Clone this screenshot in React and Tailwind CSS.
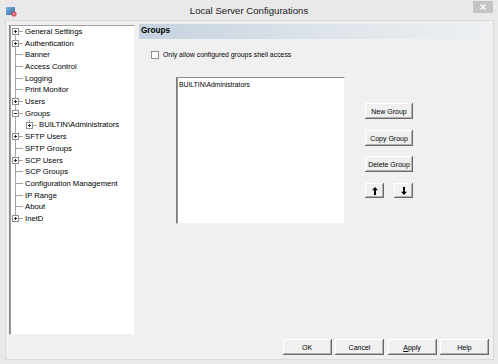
import React from "react"

const treeItems = [
  { label: "General Settings", box: "+" },
  { label: "Authentication", box: "+" },
  { label: "Banner" },
  { label: "Access Control" },
  { label: "Logging" },
  { label: "Print Monitor" },
  { label: "Users", box: "+" },
  { label: "Groups", box: "-" },
  { label: "BUILTIN\\Administrators", box: "+", level: 1 },
  { label: "SFTP Users", box: "+" },
  { label: "SFTP Groups" },
  { label: "SCP Users", box: "+" },
  { label: "SCP Groups" },
  { label: "Configuration Management" },
  { label: "IP Range" },
  { label: "About" },
  { label: "InetD", box: "+" },
]

const ROW = 11.7

function ExpandBox({ x, sign }) {
  return (
    <g>
      <rect x={x - 3} y={2.5} width={6} height={6} fill="#fff" stroke="#919191" strokeWidth="1" />
      <line x1={x - 1.5} y1={5.5} x2={x + 1.5} y2={5.5} stroke="#2a2a2a" strokeWidth="1" />
      {sign === "+" && <line x1={x} y1={4} x2={x} y2={7} stroke="#2a2a2a" strokeWidth="1" />}
    </g>
  )
}

function TreeGutter({ level = 0, first, last, box }) {
  const w = 14 * (level + 1)
  const lx = 5.5 + 14 * level
  return (
    <svg width={w} height={ROW} viewBox={`0 0 ${w} ${ROW}`} className="shrink-0">
      <g stroke="#a3a3a3" strokeWidth="1">
        {level === 0 ? (
          <line x1={5.5} y1={first ? 5.5 : 0} x2={5.5} y2={last ? 5.5 : ROW} />
        ) : (
          <>
            <line x1={5.5} y1={0} x2={5.5} y2={ROW} />
            <line x1={lx} y1={0} x2={lx} y2={5.5} />
          </>
        )}
        <line x1={lx} y1={5.5} x2={w - 1} y2={5.5} />
      </g>
      {box && <ExpandBox x={lx} sign={box} />}
    </svg>
  )
}

function WinButton({ children, className = "" }) {
  return (
    <button
      type="button"
      className={`h-[16px] bg-[#f0f0f0] text-[7px] leading-none text-black flex items-center justify-center shadow-[inset_-1px_-1px_0_#6b6b6b,inset_1px_1px_0_#ffffff,inset_-2px_-2px_0_#b0b0b0] ${className}`}
    >
      {children}
    </button>
  )
}

function ArrowIcon({ down }) {
  return (
    <svg width="6" height="8" viewBox="0 0 6 8" className={down ? "rotate-180" : ""}>
      <path d="M3 0 L6 3.2 H4 V8 H2 V3.2 H0 Z" fill="#000" />
    </svg>
  )
}

export default function App() {
  return (
    <div className="w-[498px] h-[364px] bg-[#e9e9e9] flex flex-col overflow-hidden font-['Liberation_Sans',Arial,sans-serif] text-black">
      {/* title bar */}
      <div className="h-[20px] flex shrink-0">
        <div className="w-[30px] pl-[6px] pt-[7px]">
          <svg width="11" height="10" viewBox="0 0 11 10">
            <defs>
              <linearGradient id="ic" x1="0" y1="0" x2="1" y2="1">
                <stop offset="0" stopColor="#7fb2e0" />
                <stop offset="1" stopColor="#2f6aa8" />
              </linearGradient>
            </defs>
            <rect x="0" y="0" width="9" height="8" fill="url(#ic)" />
            <circle cx="8" cy="7" r="2.6" fill="#d8545a" />
            <circle cx="8" cy="7" r="1" fill="#f2b4b6" />
          </svg>
        </div>
        <div className="flex-1 text-center text-[9.6px] leading-[21px] text-[#222]">Local Server Configurations</div>
        <div className="w-[30px] flex justify-end pr-[5px] pt-[1px]">
          <div className="w-[20px] h-[12px] bg-[#c4c4c4] flex items-center justify-center">
            <svg width="6" height="6" viewBox="0 0 6 6">
              <path d="M0.5 0.5 L5.5 5.5 M5.5 0.5 L0.5 5.5" stroke="#fff" strokeWidth="1.4" />
            </svg>
          </div>
        </div>
      </div>

      {/* client area */}
      <div className="ml-[5px] mr-[4px] mb-[4px] flex-1 border border-[#dadada] bg-[#f0f0f0] flex flex-col pl-[3px] pt-[4px] pr-[4px] pb-[4px]">
        <div className="flex h-[310px] gap-[4px]">
          {/* tree */}
          <div className="w-[126px] h-full bg-white border border-t-[#a0a0a0] border-l-[#8a8a8a] border-r-[#f4f4f4] border-b-[#f4f4f4] shadow-[inset_1px_0_0_#9a9a9a]">
            {treeItems.map((item, i) => (
              <div key={item.label} className="flex items-center" style={{ height: ROW }}>
                <TreeGutter level={item.level} first={i === 0} last={i === treeItems.length - 1} box={item.box} />
                <span className="text-[7.7px] leading-none whitespace-nowrap pl-[1px]">{item.label}</span>
              </div>
            ))}
          </div>

          {/* right panel */}
          <div className="flex-1 flex flex-col pr-[1px]">
            <div className="h-[15px] -mt-[1px] bg-gradient-to-r from-[#c5d2df] via-[#dce3ea] to-[#eef0f2] flex items-center pl-[2px]">
              <span className="text-[8.2px] font-bold leading-none">Groups</span>
            </div>

            <div className="flex items-center mt-[12px] ml-[12px]">
              <span className="w-[8px] h-[8px] bg-white border border-[#8e8e8e]" />
              <span className="ml-[4px] text-[6.9px] leading-none">Only allow configured groups shell access</span>
            </div>

            <div className="flex mt-[18px] ml-[37px]">
              <div className="w-[169px] h-[147px] bg-white border border-t-[#8a8a8a] border-l-[#7a7a7a] border-r-[#f4f4f4] border-b-[#f4f4f4] shadow-[inset_1px_0_0_#9a9a9a] px-[2px] pt-[2px]">
                <div className="text-[6.8px] leading-[9px]">BUILTIN\Administrators</div>
              </div>

              <div className="ml-[20px] mt-[26px] flex flex-col">
                <WinButton className="w-[48px]">New Group</WinButton>
                <WinButton className="w-[48px] mt-[11px]">Copy Group</WinButton>
                <WinButton className="w-[48px] mt-[10px]">Delete Group</WinButton>
                <div className="flex gap-[10px] mt-[11px]">
                  <WinButton className="w-[19px] !h-[15px]"><ArrowIcon /></WinButton>
                  <WinButton className="w-[19px] !h-[15px]"><ArrowIcon down /></WinButton>
                </div>
              </div>
            </div>
          </div>
        </div>

        {/* bottom buttons */}
        <div className="flex justify-end gap-[3.5px] mt-[4px]">
          <WinButton className="w-[49px]">OK</WinButton>
          <WinButton className="w-[49px]">Cancel</WinButton>
          <WinButton className="w-[49px]"><span><span className="underline">A</span>pply</span></WinButton>
          <WinButton className="w-[49px]">Help</WinButton>
        </div>
      </div>
    </div>
  )
}
